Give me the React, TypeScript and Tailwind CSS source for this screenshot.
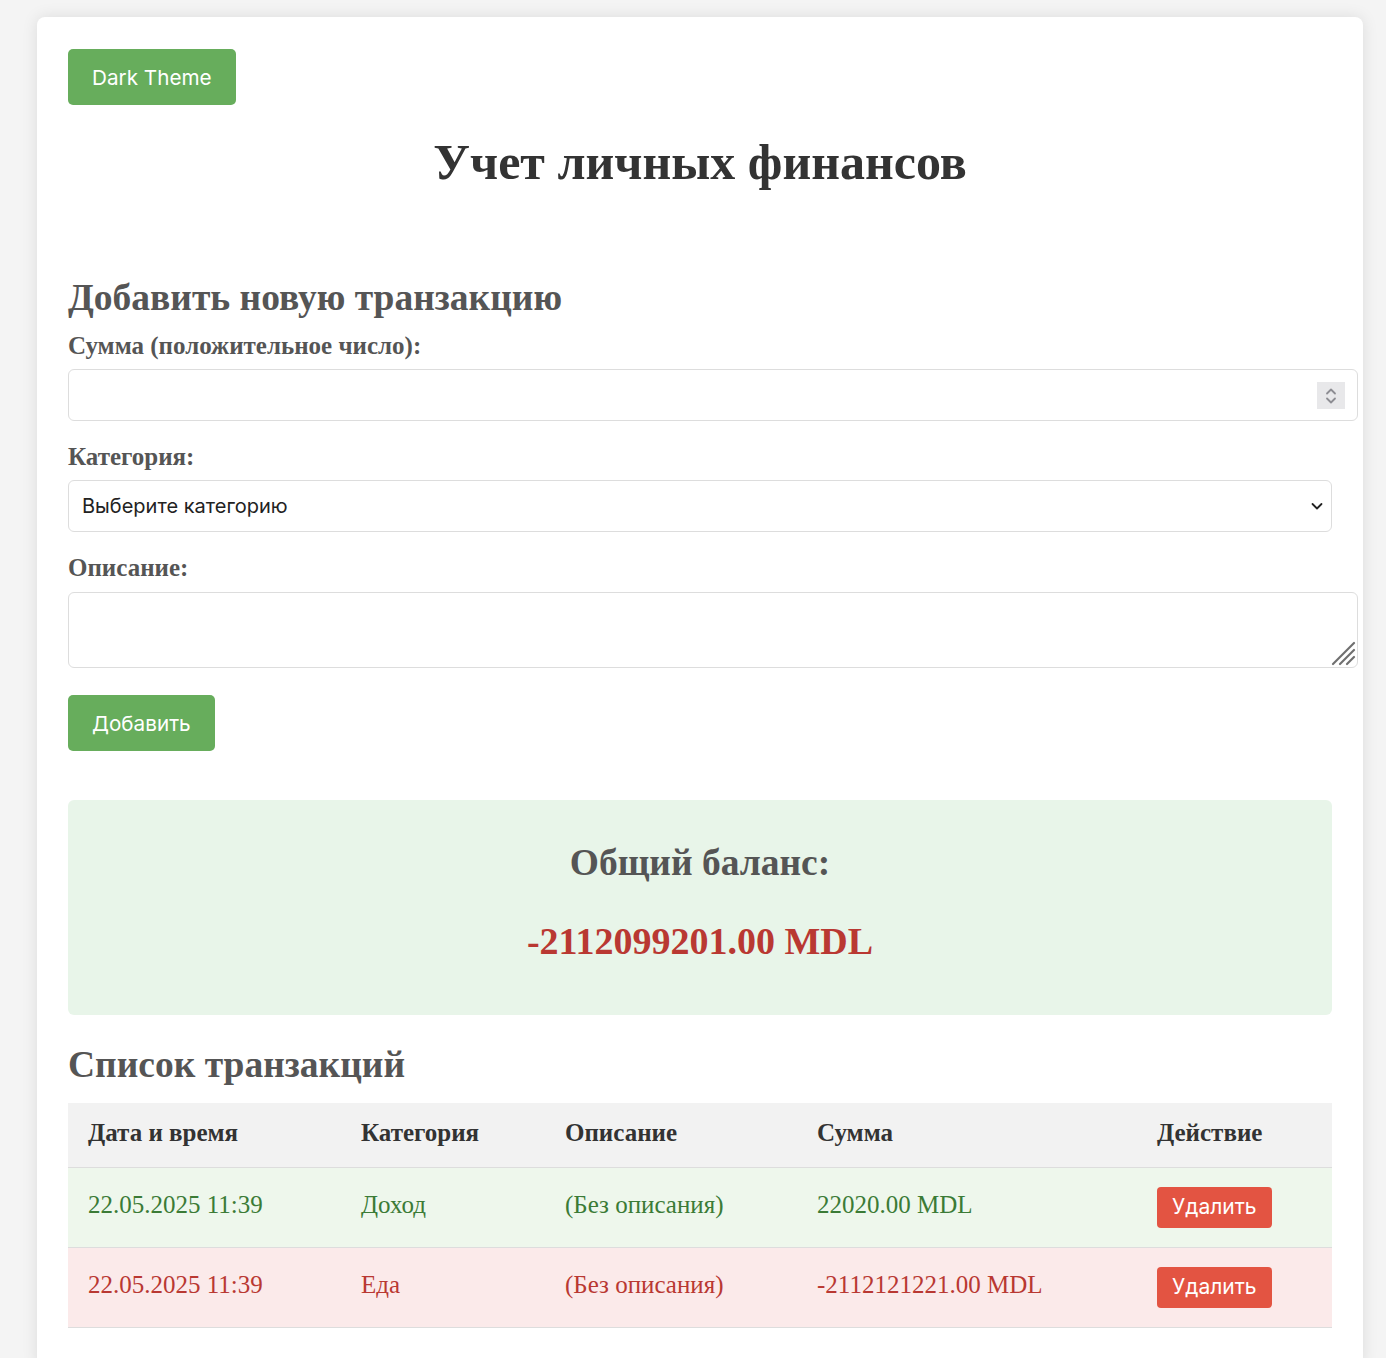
import React from 'react';

interface Transaction {
  id: number;
  date: string;
  category: string;
  description: string;
  amount: string;
  type: 'income' | 'expense';
}

const transactions: Transaction[] = [
  { id: 1, date: '22.05.2025 11:39', category: 'Доход', description: '(Без описания)', amount: '22020.00 MDL', type: 'income' },
  { id: 2, date: '22.05.2025 11:39', category: 'Еда', description: '(Без описания)', amount: '-2112121221.00 MDL', type: 'expense' },
];

const serif = "font-['Liberation_Serif','Times_New_Roman',serif]";
const sans = "font-['Inter','Noto_Sans',sans-serif]";

export default function App() {
  return (
    <div className={`min-h-[1358px] bg-[#f4f4f4] pt-[17px] ${serif}`}>
      <div className="ml-[37px] w-[1326px] bg-white rounded-lg shadow-[0_0_16px_rgba(0,0,0,0.1)] px-[31px] pt-[32px] pb-[40px]">
        <button className={`h-[56px] px-[24px] pt-[2px] rounded-[5px] bg-[#67ad5c] text-white text-[20.7px] ${sans}`}>
          Dark Theme
        </button>

        <h1 className="mt-[30px] text-center text-[50px] leading-[55px] font-bold text-[#333]">
          Учет личных финансов
        </h1>

        <h2 className="mt-[87px] text-[37.5px] leading-[41px] font-bold text-[#555]">
          Добавить новую транзакцию
        </h2>

        <label className="block mt-[14px] text-[25px] leading-[28px] font-bold text-[#555]">
          Сумма (положительное число):
        </label>
        <div className="relative mt-[9px] w-[calc(100%+26px)]">
          <input
            type="number"
            className="block w-full h-[52px] box-border border border-[#ddd] rounded-md px-[12px] text-[20px] outline-none [appearance:textfield] [&::-webkit-inner-spin-button]:appearance-none"
          />
          {/* spin buttons, drawn since chromium hides them until hover */}
          <div className="absolute right-[13px] top-[13px] w-[28px] h-[27px] bg-[#e8e8ea] flex items-center justify-center">
            <svg width="16" height="22" viewBox="0 0 16 22" fill="none" stroke="#8d8d93" strokeWidth="1.8" strokeLinecap="round" strokeLinejoin="round">
              <path d="M4 8.5 L8 4.5 L12 8.5" />
              <path d="M4 13.5 L8 17.5 L12 13.5" />
            </svg>
          </div>
        </div>

        <label className="block mt-[22px] text-[25px] leading-[28px] font-bold text-[#555]">
          Категория:
        </label>
        <div className="relative mt-[9px]">
          <select
            defaultValue=""
            className={`block w-full h-[52px] box-border border border-[#ddd] rounded-md pl-[13px] pr-[40px] bg-white text-[20px] text-[#222] appearance-none outline-none ${sans}`}
          >
            <option value="">Выберите категорию</option>
            <option value="income">Доход</option>
            <option value="food">Еда</option>
          </select>
          <svg
            className="absolute right-[8px] top-[19px] pointer-events-none"
            width="14"
            height="14"
            viewBox="0 0 14 14"
            fill="none"
            stroke="#222"
            strokeWidth="1.8"
            strokeLinecap="round"
            strokeLinejoin="round"
          >
            <path d="M2.5 5 L7 9.5 L11.5 5" />
          </svg>
        </div>

        <label className="block mt-[22px] text-[25px] leading-[28px] font-bold text-[#555]">
          Описание:
        </label>
        <div className="relative mt-[10px] w-[calc(100%+26px)]">
          <textarea className="block w-full h-[76px] box-border border border-[#ddd] rounded-md px-[12px] py-[8px] text-[20px] outline-none resize-none" />
          <svg className="absolute right-[2px] bottom-[2px] pointer-events-none" width="26" height="26" viewBox="0 0 26 26" stroke="#6f6f6f" strokeWidth="2.2" strokeLinecap="round">
            <path d="M3 24 L24 3" />
            <path d="M10 24 L24 10" />
            <path d="M17 24 L24 17" />
          </svg>
        </div>

        <button className={`mt-[27px] h-[56px] px-[24px] pt-[2px] rounded-[5px] bg-[#67ad5c] text-white text-[20.7px] ${sans}`}>
          Добавить
        </button>

        <div className="mt-[49px] h-[215px] rounded-md bg-[#e8f5e9] flex flex-col items-center pt-[42px]">
          <h3 className="text-[37.5px] leading-[41px] font-bold text-[#555]">Общий баланс:</h3>
          <p className="mt-[37px] text-[38px] leading-[42px] font-bold text-[#b93832]">-2112099201.00 MDL</p>
        </div>

        <h2 className="mt-[29px] text-[37.5px] leading-[41px] font-bold text-[#555]">
          Список транзакций
        </h2>

        <table className="mt-[18px] w-full border-collapse text-[25px]">
          <thead>
            <tr className="bg-[#f2f2f2] border-b border-[#ddd]">
              <th className="w-[293px] h-[64px] pl-[20px] pb-[4px] text-left font-bold text-[#333]">Дата и время</th>
              <th className="w-[204px] pb-[4px] text-left font-bold text-[#333]">Категория</th>
              <th className="w-[252px] pb-[4px] text-left font-bold text-[#333]">Описание</th>
              <th className="w-[340px] pb-[4px] text-left font-bold text-[#333]">Сумма</th>
              <th className="pb-[4px] text-left font-bold text-[#333]">Действие</th>
            </tr>
          </thead>
          <tbody>
            {transactions.map((t) => {
              const rowColor = t.type === 'income' ? 'bg-[#eef7ec] text-[#3b7b36]' : 'bg-[#fbeaea] text-[#b93832]';
              return (
                <tr key={t.id} className={`${rowColor} border-b border-[#ddd]`}>
                  <td className="h-[80px] pl-[20px] pb-[4px]">{t.date}</td>
                  <td className="pb-[4px]">{t.category}</td>
                  <td className="pb-[4px]">{t.description}</td>
                  <td className="pb-[4px]">{t.amount}</td>
                  <td>
                    <button className={`h-[41px] px-[15px] rounded-[4px] bg-[#e35442] text-white text-[21px] ${sans}`}>
                      Удалить
                    </button>
                  </td>
                </tr>
              );
            })}
          </tbody>
        </table>
      </div>
    </div>
  );
}
